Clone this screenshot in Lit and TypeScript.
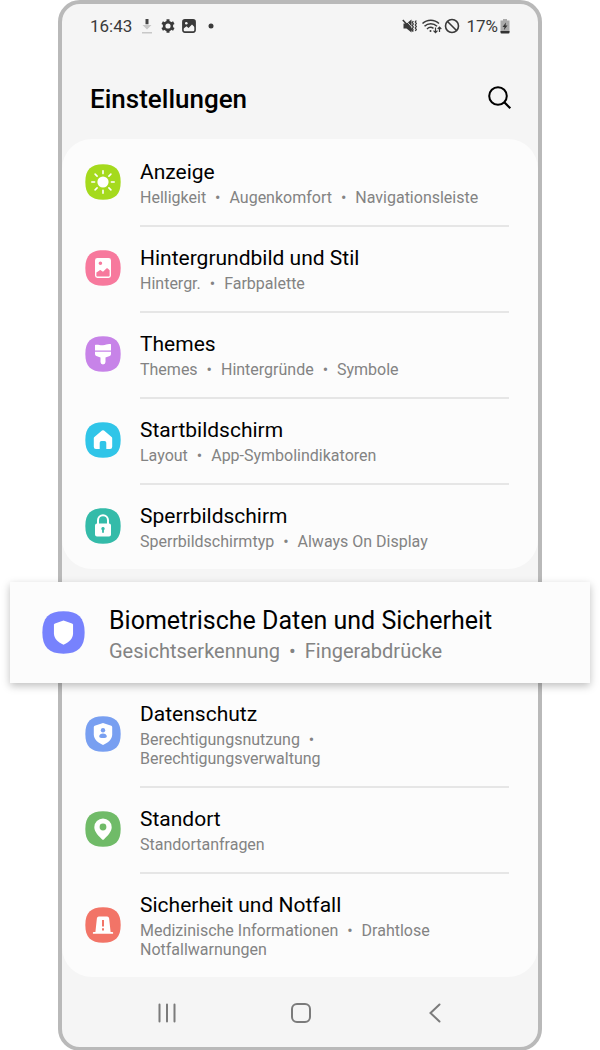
import { LitElement, html, css, svg, nothing } from "lit";
import type { SVGTemplateResult } from "lit";
import { customElement, property } from "lit/decorators.js";

interface Entry {
  title: string;
  details: string[];
  color: string;
  glyph: SVGTemplateResult;
}

const displayEntries: Entry[] = [
  {
    title: "Anzeige",
    details: ["Helligkeit", "Augenkomfort", "Navigationsleiste"],
    color: "#a5da1d",
    glyph: svg`<circle cx="18" cy="18" r="5.6" fill="#fff"/>
      <path d="M18 6.8v2.8M18 26.4v2.8M6.8 18h2.8M26.4 18h2.8M10.1 10.1l2 2M23.9 23.9l2 2M10.1 25.9l2-2M23.9 12.1l2-2" stroke="#fff" stroke-width="1.6" stroke-linecap="round"/>`,
  },
  {
    title: "Hintergrundbild und Stil",
    details: ["Hintergr.", "Farbpalette"],
    color: "#f7799d",
    glyph: svg`<path fill="#fff" fill-rule="evenodd" d="M12.4 8h11.2a2.4 2.4 0 0 1 2.4 2.4v15.2a2.4 2.4 0 0 1-2.4 2.4H12.4a2.4 2.4 0 0 1-2.4-2.4V10.4A2.4 2.4 0 0 1 12.4 8zM15.4 11.4a1.8 1.8 0 1 0 0 3.6 1.8 1.8 0 0 0 0-3.6zM11.4 22.6v3.2c0 .5.3.8.8.8h11.6c.5 0 .8-.3.8-.8v-5.6l-1.8-1.7c-.5-.4-1-.4-1.4 0l-3.4 3.3-2.3-1.5c-.4-.3-.9-.2-1.2.1z"/>`,
  },
  {
    title: "Themes",
    details: ["Themes", "Hintergründe", "Symbole"],
    color: "#c783e8",
    glyph: svg`<path fill="#fff" d="M10 9c2.7-1 5 .7 8 .3s5.2-1.8 8-1v6.2H10zM10 15.8h16v2.2a2 2 0 0 1-1.3 1.9l-4.2 1.7v4.4a2.5 2.5 0 0 1-5 0v-4.4l-4.2-1.7a2 2 0 0 1-1.3-1.9z"/>`,
  },
  {
    title: "Startbildschirm",
    details: ["Layout", "App-Symbolindikatoren"],
    color: "#30c5e8",
    glyph: svg`<path fill="#fff" d="M17 8.6a1.6 1.6 0 0 1 2 0l7.6 6.3c.4.3.6.8.6 1.3v8.6a2.2 2.2 0 0 1-2.2 2.2h-3.7v-6.2a1.8 1.8 0 0 0-1.8-1.8h-3a1.8 1.8 0 0 0-1.8 1.8V27H11a2.2 2.2 0 0 1-2.2-2.2v-8.6c0-.5.2-1 .6-1.3z"/>`,
  },
  {
    title: "Sperrbildschirm",
    details: ["Sperrbildschirmtyp", "Always On Display"],
    color: "#34bba9",
    glyph: svg`<path fill="none" stroke="#fff" stroke-width="2" d="M13 17v-4.7a5 5 0 0 1 10 0V17"/>
      <path fill="#fff" fill-rule="evenodd" d="M12 15.5h12a2 2 0 0 1 2 2v9a2 2 0 0 1-2 2H12a2 2 0 0 1-2-2v-9a2 2 0 0 1 2-2zM18 19a1.8 1.8 0 0 0-.9 3.3v2.5h1.8v-2.5A1.8 1.8 0 0 0 18 19z"/>`,
  },
];

const securityEntry: Entry = {
  title: "Biometrische Daten und Sicherheit",
  details: ["Gesichtserkennung", "Fingerabdrücke"],
  color: "#7782fd",
  glyph: svg`<path fill="#fff" d="M18 8l7.1 2.4c.5.2.9.7.9 1.2v7.2c0 4.3-3.6 7.4-8 9.4-4.4-2-8-5.1-8-9.4v-7.2c0-.5.4-1 .9-1.2z"/>`,
};

const privacyEntries: Entry[] = [
  {
    title: "Datenschutz",
    details: ["Berechtigungsnutzung", "Berechtigungsverwaltung"],
    color: "#789ff1",
    glyph: svg`<path fill="#fff" d="M18 7l8.3 2.7c.5.2.9.7.9 1.2v7.6c0 4.7-4 8.2-9.2 10.5-5.2-2.3-9.2-5.8-9.2-10.5v-7.6c0-.5.4-1 .9-1.2z"/>
      <circle cx="18" cy="14.3" r="2.2" fill="#789ff1"/>
      <path fill="#789ff1" d="M14.2 20.6c0-2 1.8-3 3.8-3s3.8 1 3.8 3c0 1-1.8 1.5-3.8 1.5s-3.8-.5-3.8-1.5z"/>`,
  },
  {
    title: "Standort",
    details: ["Standortanfragen"],
    color: "#70bb68",
    glyph: svg`<path fill="#fff" fill-rule="evenodd" d="M18 7.500a8.700 8.700 0 0 0-8.700 8.700c0 4.500 4.700 9.200 7.600 12a1.600 1.600 0 0 0 2.200 0c2.900-2.800 7.600-7.500 7.600-12A8.700 8.700 0 0 0 18 7.500zM18 12.600a3.400 3.400 0 1 1 0 6.800 3.400 3.400 0 0 1 0-6.800z"/>`,
  },
  {
    title: "Sicherheit und Notfall",
    details: ["Medizinische Informationen", "Drahtlose Notfallwarnungen"],
    color: "#f27467",
    glyph: svg`<path fill="#fff" fill-rule="evenodd" d="M13.900 9.500h8.200a2 2 0 0 1 2 1.700L25.600 25h1.700c.6 0 .9.300.9.900s-.3.900-.9.900H8.700c-.6 0-.9-.3-.9-.9s.3-.9.900-.9h1.700l1.500-13.800a2 2 0 0 1 2-1.700zM17 13v6.500h2V13zM17 21.300v2.100h2v-2.100z"/>`,
  },
];

@customElement("settings-row")
class SettingsRow extends LitElement {
  static styles = css`
    :host {
      display: block;
    }
    .row {
      display: flex;
      gap: 19px;
      padding: 0 29px 0 23px;
      color: #000;
      text-decoration: none;
    }
    .icon {
      flex: none;
      align-self: center;
      width: 36px;
      height: 36px;
    }
    .text {
      flex: 1;
      box-sizing: border-box;
      padding: 20px 0 18px;
      background: linear-gradient(#e6e6e6, #e6e6e6) top / 100% 0 no-repeat;
    }
    .divided {
      background-size: 100% 2px;
    }
    .title {
      display: block;
      font-size: 21px;
      line-height: 26px;
    }
    .details {
      display: block;
      margin-top: 3px;
      padding-right: 16px;
      font-size: 16px;
      line-height: 19px;
      color: #838383;
    }
    .bullet {
      margin: 0 5px;
    }
    .large {
      gap: 24px;
      padding: 0 32px;
    }
    .large .icon {
      width: 43px;
      height: 43px;
    }
    .large .text {
      padding: 23px 0 20px;
    }
    .large .title {
      font-size: 25px;
      line-height: 32px;
    }
    .large .details {
      font-size: 20px;
      line-height: 23px;
    }
    .large .bullet {
      margin: 0 4px;
    }
  `;

  @property({ attribute: false }) entry!: Entry;
  @property({ type: Boolean }) divided = false;
  @property({ type: Boolean }) large = false;

  render() {
    const { title, details, color, glyph } = this.entry;
    return html`<a class="row ${this.large ? "large" : ""}" href="#">
      <svg class="icon" viewBox="0 0 36 36" fill="none" aria-hidden="true">
        <path fill=${color} d="M18 .3C30.2.3 35.7 5.8 35.7 18S30.2 35.7 18 35.7.3 30.2.3 18 5.8.3 18 .3z"/>
        ${glyph}
      </svg>
      <span class="text ${this.divided ? "divided" : ""}">
        <span class="title">${title}</span>
        <span class="details">${details.map(
          (d, i) => html`${i ? html`<span class="bullet">\u00a0•</span> ` : nothing}${d}`
        )}</span>
      </span>
    </a>`;
  }
}

@customElement("app-root")
class AppRoot extends LitElement {
  static styles = css`
    :host {
      display: block;
      padding: 0 58px;
      background: #fff;
      font-family: Roboto, "Liberation Sans", sans-serif;
      color: #000;
    }
    .phone {
      border: 4px solid #b9b9b9;
      border-radius: 22px;
      background: #f5f5f5;
    }
    .status {
      display: flex;
      justify-content: space-between;
      align-items: center;
      padding: 10px 28px 0 28px;
      height: 24px;
      font-size: 17px;
      line-height: 24px;
      color: #3a3a3a;
    }
    .group {
      display: flex;
      align-items: center;
    }
    .left {
      gap: 7px;
    }
    .right {
      gap: 2px;
    }
    .clock {
      padding-right: 1px;
    }
    .group svg {
      display: block;
    }
    .head {
      display: flex;
      justify-content: space-between;
      align-items: center;
      padding: 42px 26px 20px 28px;
    }
    h1 {
      margin: 0;
      font-size: 26px;
      line-height: 39px;
      font-weight: 500;
    }
    button {
      display: block;
      padding: 0;
      border: 0;
      background: none;
    }
    button svg {
      display: block;
    }
    .search {
      padding-bottom: 4px;
    }
    ul {
      margin: 0;
      padding: 0;
      list-style: none;
    }
    .card {
      border-radius: 30px;
      background: #fcfcfc;
    }
    .card.lower {
      border-radius: 0 0 30px 30px;
    }
    .callout {
      position: relative;
      margin: 13px -52px -2px;
      background: #fcfcfc;
      box-shadow: 0 3px 8px rgba(0, 0, 0, 0.25);
    }
    .nav {
      display: flex;
      justify-content: space-between;
      align-items: center;
      padding: 22px 89px 20px 91px;
    }
  `;

  private list(entries: Entry[], extra = "") {
    return html`<ul class="card ${extra}">
      ${entries.map(
        (e, i) => html`<li><settings-row .entry=${e} ?divided=${i > 0}></settings-row></li>`
      )}
    </ul>`;
  }

  render() {
    return html`<main class="phone">
      <div class="status">
        <div class="group left">
          <span class="clock">16:43</span>
          <svg width="14" height="16" viewBox="0 0 14 16" aria-hidden="true">
            <path fill="#444" d="M5.5 1h3v5h-3z"/><path fill="#c8c8c8" d="M5.5 6h3v1h3L7 11.5 2.5 7h3zM2 14h10v1.5H2z"/>
          </svg>
          <svg width="14" height="14" viewBox="0 0 14 14" aria-hidden="true">
            <circle cx="7" cy="7" r="3.9" fill="none" stroke="#3a3a3a" stroke-width="2.6"/>
            <path stroke="#3a3a3a" stroke-width="3" d="M7 .3v2.5M7 11.2v2.5M1.2 3.65l2.2 1.25M10.6 9.1l2.2 1.25M1.2 10.35l2.2-1.25M10.6 4.9l2.2-1.25"/>
          </svg>
          <svg width="14" height="14" viewBox="0 0 14 14" aria-hidden="true">
            <rect x=".9" y=".9" width="12.2" height="12.2" rx="2" fill="none" stroke="#3a3a3a" stroke-width="1.6"/>
            <path fill="#3a3a3a" d="M1 1h12v7.5L10 5.5 6.5 9 4.5 7.2 1 10z"/><circle cx="4.3" cy="4.3" r="1.3" fill="#f5f5f5"/>
          </svg>
          <svg width="14" height="14" viewBox="0 0 14 14" aria-hidden="true"><circle cx="8" cy="7" r="2.5" fill="#3a3a3a"/></svg>
        </div>
        <div class="group right">
          <svg width="16" height="16" viewBox="0 0 16 16" fill="none" stroke="#3a3a3a" aria-hidden="true">
            <path fill="#3a3a3a" stroke="none" d="M1.5 5.5h3l5-4v13l-5-4h-3z"/>
            <path stroke="#f5f5f5" stroke-width=".8" d="M3 1.5l8.500 9.500"/>
            <path stroke-width="1.5" d="M.8 2l10.5 11.5"/>
            <path stroke-width="1.3" d="M11.3 3l-1 1.5 1 1.5-1 1.5 1 1.5-1 1.5 1 1.5M14.3 2.5l-1 1.5 1 1.5-1 1.5 1 1.5-1 1.5 1 1.5-1 1.5"/>
          </svg>
          <svg width="22" height="16" viewBox="0 0 22 16" fill="none" stroke="#3a3a3a" stroke-width="1.5" aria-hidden="true">
            <path d="M2.5 5.5c4.5-4.5 12-4.5 16.5 0M4.5 8.3c3.5-3.5 9-3.5 12.5 0M7 11c2-2 4.500-2 6.500-.6"/>
            <circle cx="10.5" cy="12.9" r="1" fill="#3a3a3a" stroke="none"/>
            <path stroke-width="1.2" d="M15.5 9.5v5M13.5 12.7l2 2 2-2M19.5 14V9.3M17.7 11l1.8-1.8L21.3 11"/>
          </svg>
          <svg width="16" height="16" viewBox="0 0 16 16" fill="none" stroke="#3a3a3a" stroke-width="1.6" aria-hidden="true">
            <circle cx="8" cy="8" r="6.5"/><path d="M3.500 3.500l9 9"/>
          </svg>
          <span>&nbsp;17%</span>
          <svg width="10" height="15" viewBox="0 0 10 15" aria-hidden="true">
            <path fill="#aaa" d="M3 0h4v1.5h2.500V13H.5V1.500H3z"/><path fill="#333" d="M.5 12h9v1.500a1 1 0 0 1-1 1h-7a1 1 0 0 1-1-1zM6 3.500L2.500 8h2L4 11l3.500-4.500h-2z"/>
          </svg>
        </div>
      </div>
      <header class="head">
        <h1>Einstellungen</h1>
        <button class="search" aria-label="Suche">
          <svg width="25" height="25" viewBox="0 0 25 25" fill="none" stroke="#000" stroke-width="2" aria-hidden="true">
            <circle cx="11" cy="11" r="8.8"/><path stroke-width="2.2" d="M17.3 17.3l6 6"/>
          </svg>
        </button>
      </header>
      ${this.list(displayEntries)}
      <div class="callout"><settings-row .entry=${securityEntry} large></settings-row></div>
      ${this.list(privacyEntries, "lower")}
      <nav class="nav">
        <button aria-label="Letzte Apps">
          <svg width="28" height="28" viewBox="0 0 28 28" stroke="#7b7b7b" stroke-width="2" stroke-linecap="round" aria-hidden="true">
            <path d="M6.5 5.5v17M14 5.5v17M21.5 5.5v17"/>
          </svg>
        </button>
        <button aria-label="Startseite">
          <svg width="28" height="28" viewBox="0 0 28 28" fill="none" stroke="#7b7b7b" stroke-width="2" aria-hidden="true">
            <rect x="5" y="5" width="18" height="18" rx="5"/>
          </svg>
        </button>
        <button aria-label="Zurück">
          <svg width="28" height="28" viewBox="0 0 28 28" fill="none" stroke="#7b7b7b" stroke-width="2" stroke-linecap="round" aria-hidden="true">
            <path d="M18.5 5.5L9.5 14l9 8.5"/>
          </svg>
        </button>
      </nav>
    </main>`;
  }
}
